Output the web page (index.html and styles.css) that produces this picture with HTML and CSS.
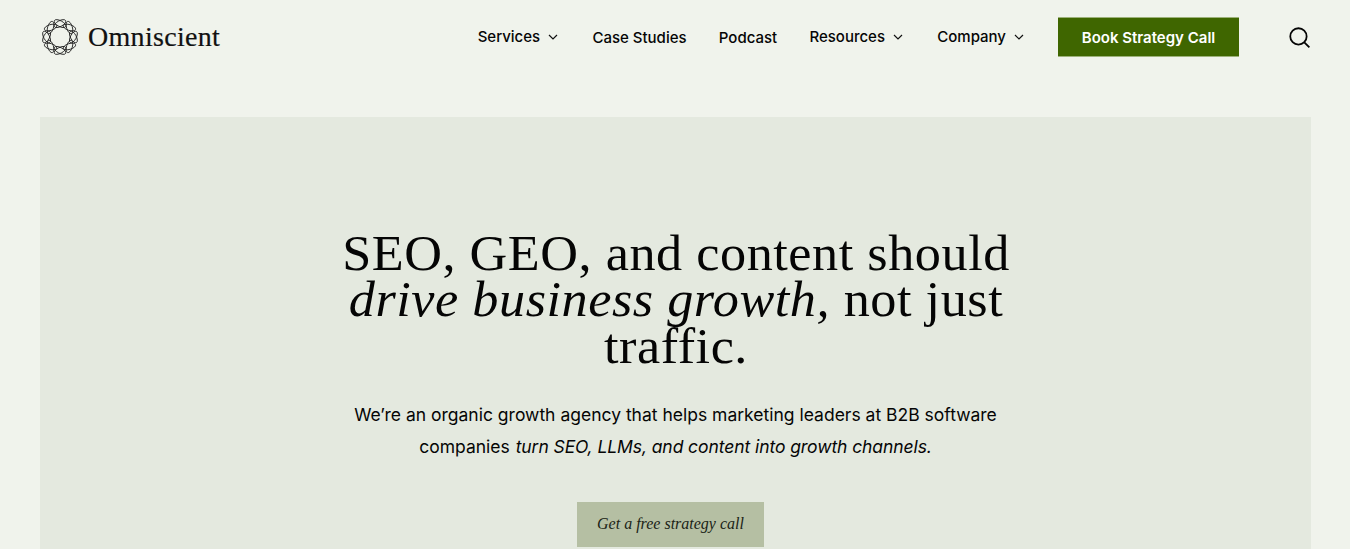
FILE: index.html
```html
<!DOCTYPE html>
<html lang="en">
<head>
    <meta charset="UTF-8">
    <title>Omniscient</title>
    <link rel="stylesheet" href="styles.css">
</head>
<body>
    <header class="site-header">
        <a class="logo" href="#">
            <svg class="logo-mark" viewBox="0 0 36 36" fill="none" stroke="#222" stroke-width="0.85">
                <defs>
                    <g id="knot">
                        <ellipse cx="18" cy="4.6" rx="6.4" ry="2.9" transform="rotate(28 18 4.6)"/>
                        <ellipse cx="18" cy="4.6" rx="6.4" ry="2.9" transform="rotate(-28 18 4.6)"/>
                    </g>
                </defs>
                <use href="#knot"/>
                <use href="#knot" transform="rotate(45 18 18)"/>
                <use href="#knot" transform="rotate(90 18 18)"/>
                <use href="#knot" transform="rotate(135 18 18)"/>
                <use href="#knot" transform="rotate(180 18 18)"/>
                <use href="#knot" transform="rotate(225 18 18)"/>
                <use href="#knot" transform="rotate(270 18 18)"/>
                <use href="#knot" transform="rotate(315 18 18)"/>
            </svg>
            <span class="logo-text">Omniscient</span>
        </a>
        <nav class="main-nav">
            <a class="nav-link has-menu" href="#">Services
                <svg class="chevron" viewBox="0 0 10 6"><path d="M1 1l4 4 4-4"/></svg>
            </a>
            <a class="nav-link" href="#">Case Studies</a>
            <a class="nav-link" href="#">Podcast</a>
            <a class="nav-link has-menu" href="#">Resources
                <svg class="chevron" viewBox="0 0 10 6"><path d="M1 1l4 4 4-4"/></svg>
            </a>
            <a class="nav-link has-menu" href="#">Company
                <svg class="chevron" viewBox="0 0 10 6"><path d="M1 1l4 4 4-4"/></svg>
            </a>
        </nav>
        <a class="book-btn" href="#">Book Strategy Call</a>
        <svg class="search-icon" viewBox="0 0 20 20"><circle cx="9" cy="9" r="7.8"/><path d="M14.6 14.6L19.4 19.4"/></svg>
    </header>

    <main class="hero">
        <h1>SEO, GEO, and content should <em>drive business growth,</em> not just traffic.</h1>
        <p>We’re an organic growth agency that helps marketing leaders at B2B software companies <em>turn SEO, LLMs, and content into growth channels.</em></p>
        <a class="cta" href="#">Get a free strategy call</a>
    </main>
</body>
</html>
```

FILE: styles.css
```css
html, body {
    height: 100%;
}
body {
    margin: 0;
    height: 549px;
    overflow: hidden;
    display: flex;
    flex-direction: column;
    background: #f0f3ec;
    color: #050505;
    font-family: 'Inter', sans-serif;
}
a {
    color: inherit;
    text-decoration: none;
}
.site-header {
    display: flex;
    align-items: center;
    height: 74px;
    padding: 0 40px 0 42px;
    flex-shrink: 0;
}
.logo {
    display: flex;
    align-items: center;
    gap: 10px;
}
.logo-mark {
    width: 36px;
    height: 36px;
}
.logo-text {
    font-family: 'Liberation Serif', serif;
    font-size: 28px;
    letter-spacing: 0.3px;
    color: #111;
    -webkit-text-stroke: 0.2px #111;
}
.main-nav {
    display: flex;
    align-items: center;
    gap: 32.25px;
    margin-left: auto;
}
.nav-link {
    font-size: 15px;
    font-weight: 500;
    white-space: nowrap;
}
.has-menu {
    display: flex;
    align-items: center;
    gap: 8px;
    margin-right: 2px;
    margin-bottom: 2px;
}
.chevron {
    width: 10px;
    height: 6px;
    margin-top: 2px;
    fill: none;
    stroke: #111;
    stroke-width: 1.2;
}
.book-btn {
    margin-left: 32px;
    width: 181px;
    height: 40px;
    display: flex;
    align-items: center;
    justify-content: center;
    box-sizing: border-box;
    background: #3f6600;
    border-top: 1px solid #9db27a;
    border-bottom: 1px solid #9db27a;
    color: #fff;
    font-size: 15px;
    font-weight: 600;
}
.search-icon {
    width: 21px;
    height: 21px;
    margin-left: 50px;
    fill: none;
    stroke: #050505;
    stroke-width: 1.7;
}
.hero {
    flex: 1;
    margin: 43px 39px 0 40px;
    padding-top: 112.5px;
    display: flex;
    flex-direction: column;
    align-items: center;
    background: #e4e9df;
    text-align: center;
}
.hero h1 {
    margin: 0;
    width: 700px;
    font-family: 'Liberation Serif', serif;
    font-size: 50px;
    font-weight: 400;
    letter-spacing: 0.5px;
    line-height: 46.5px;
    transform: scaleX(1.045);
}
.hero p {
    margin: 29.5px 0 0;
    width: 680px;
    font-size: 17.5px;
    line-height: 32px;
}
.hero p em {
    padding-left: 1px;
    letter-spacing: -0.08px;
}
.cta {
    margin: 39px 10px 0 0;
    width: 187px;
    height: 45px;
    display: flex;
    align-items: center;
    justify-content: center;
    background: #b5bfa3;
    font-family: 'Liberation Serif', serif;
    font-style: italic;
    font-size: 16px;
    color: #1b1f17;
}
```
